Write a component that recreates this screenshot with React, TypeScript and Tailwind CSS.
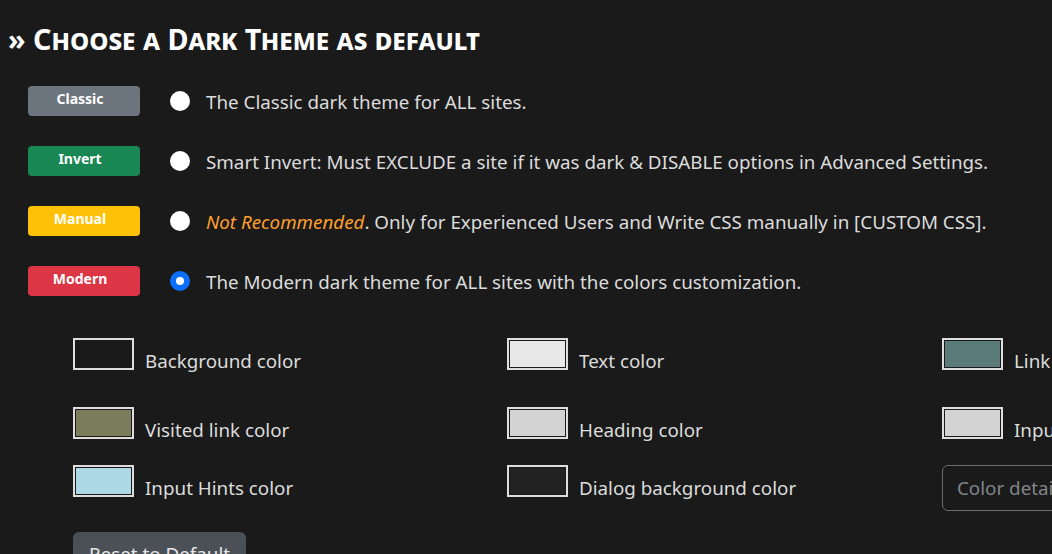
import React from "react";

const badges = [
  { label: "Classic", bg: "bg-[#6c757d]" },
  { label: "Invert", bg: "bg-[#198754]" },
  { label: "Manual", bg: "bg-[#ffc107]" },
  { label: "Modern", bg: "bg-[#dc3545]" },
];

function Radio({ checked }: { checked?: boolean }) {
  return checked ? (
    <span className="flex h-[20px] w-[20px] shrink-0 items-center justify-center rounded-full bg-[#0d6efd]">
      <span className="block h-[8px] w-[8px] rounded-full bg-white" />
    </span>
  ) : (
    <span className="block h-[20px] w-[20px] shrink-0 rounded-full bg-white" />
  );
}

function Swatch({ color, label }: { color: string; label: string }) {
  return (
    <div className="flex items-start">
      <div className="h-[32px] w-[61px] shrink-0 border-2 border-[#dedede] p-[1px]">
        <div className="h-full w-full" style={{ backgroundColor: color }} />
      </div>
      <span className="mt-[9px] ml-[11px] whitespace-nowrap text-[18.8px] leading-[28px] text-[#dcdcdc]">{label}</span>
    </div>
  );
}

export default function App() {
  return (
    <div
      className="h-[554px] w-[1052px] overflow-hidden bg-[#1a1a1a] text-[#dcdcdc]"
      style={{ fontFamily: '"Noto Sans", "Open Sans", sans-serif' }}
    >
      <h2 className="pl-[8px] pt-[21px] text-[28.7px] font-bold leading-[36px] text-white [font-variant:small-caps]">
        » Choose a Dark Theme as default
      </h2>
      <div className="mt-[14px] flex flex-col pl-[28px]">
        {badges.map((b, i) => (
          <div key={b.label} className="flex h-[60px] items-center">
            <span
              className={`flex h-[30px] w-[112px] shrink-0 justify-center rounded-[4px] pr-[8px] pt-[3px] text-[14px] font-bold leading-[20px] text-white ${b.bg}`}
            >
              {b.label}
            </span>
            <span className="ml-[30px] block">
              <Radio checked={i === 3} />
            </span>
            <span className="ml-[16px] mt-[2px] whitespace-nowrap text-[18.8px] leading-[28px] text-[#dcdcdc]">
              {i === 0 && "The Classic dark theme for ALL sites."}
              {i === 1 && "Smart Invert: Must EXCLUDE a site if it was dark & DISABLE options in Advanced Settings."}
              {i === 2 && (
                <>
                  <em className="text-[#ff9f2e]">Not Recommended</em>. Only for Experienced Users and Write CSS manually in [CUSTOM CSS].
                </>
              )}
              {i === 3 && "The Modern dark theme for ALL sites with the colors customization."}
            </span>
          </div>
        ))}
      </div>
      <div className="mt-[27px] grid grid-cols-[434px_435px_434px] pl-[73px]">
        <div className="h-[69px]"><Swatch color="#1a1a1a" label="Background color" /></div>
        <div className="h-[69px]"><Swatch color="#e8e8e8" label="Text color" /></div>
        <div className="h-[69px]"><Swatch color="#5b7b7b" label="Link color" /></div>
        <div className="h-[58px]"><Swatch color="#7b7c5c" label="Visited link color" /></div>
        <div className="h-[58px]"><Swatch color="#d3d3d3" label="Heading color" /></div>
        <div className="h-[58px]"><Swatch color="#d3d3d3" label="Input color" /></div>
        <div className="h-[66px]"><Swatch color="#add8e6" label="Input Hints color" /></div>
        <div className="h-[66px]"><Swatch color="#222222" label="Dialog background color" /></div>
        <div className="h-[66px]">
          <input
            placeholder="Color details"
            className="h-[46px] w-[300px] rounded-[6px] border border-[#6a6a6a] bg-transparent px-[14px] text-[18.8px] text-[#dcdcdc] outline-none placeholder:text-[#80858a]"
          />
        </div>
      </div>
      <button className="ml-[73px] mt-[1px] h-[44px] rounded-[6px] bg-[#4b5056] px-[16px] text-[18.8px] leading-[28px] text-[#e6e6e6]">
        Reset to Default
      </button>
    </div>
  );
}
